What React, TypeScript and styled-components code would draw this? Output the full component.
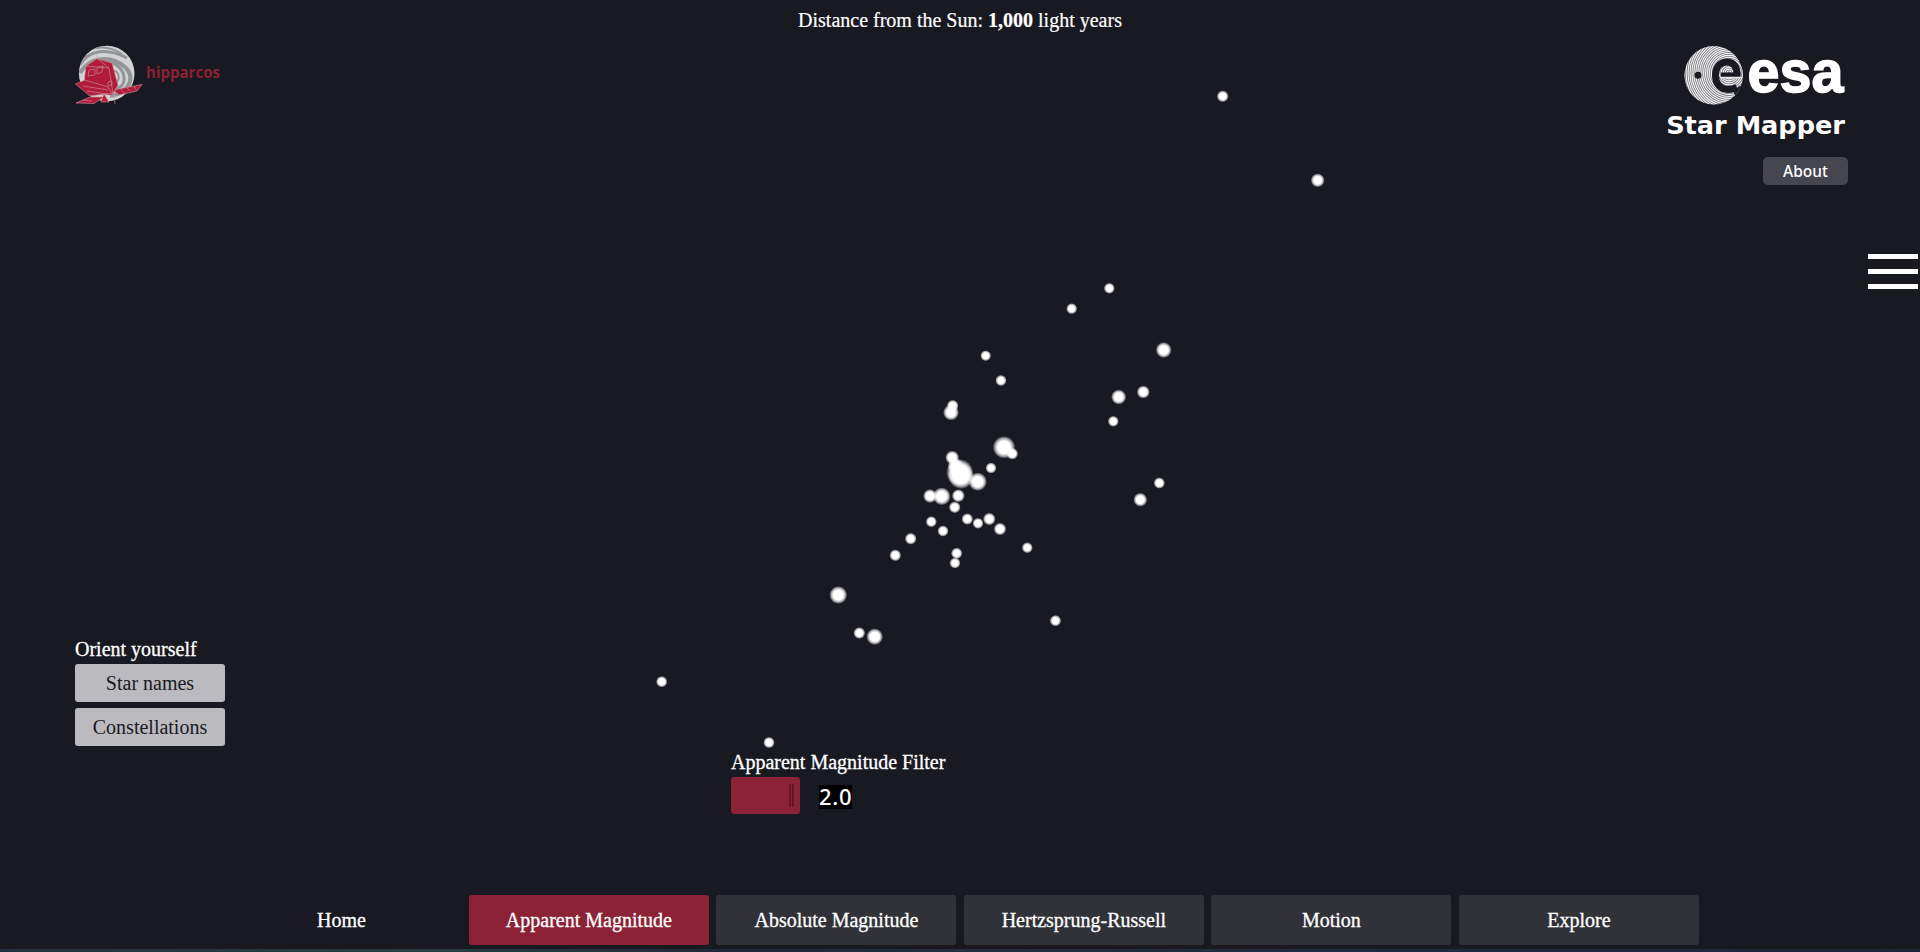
import React from "react";
import styled, { createGlobalStyle } from "styled-components";

const GlobalStyle = createGlobalStyle`
  * { box-sizing: border-box; }
  body {
    margin: 0;
    background: #191922;
    color: #fff;
    font-family: "Liberation Serif", "Times New Roman", serif;
    font-size: 20px;
    overflow: hidden;
  }
  button { font: inherit; border: 0; padding: 0; cursor: pointer; }
`;

const Page = styled.div`
  position: relative;
  display: flex;
  flex-direction: column;
  width: 1920px;
  height: 952px;
  background: #191922;
`;

const StarField = styled.svg`
  position: absolute;
  inset: 0;
  pointer-events: none;
`;

const Main = styled.main`
  display: grid;
  grid-template-columns: 731px 458px 1fr;
  height: 895px;
`;

const LeftColumn = styled.aside`
  display: flex;
  flex-direction: column;
  align-items: flex-start;
  padding: 44px 0 0 75px;
`;

const MissionLogo = styled.svg`
  display: block;
`;

const OrientGroup = styled.section`
  display: flex;
  flex-direction: column;
  gap: 6px;
  width: 150px;
  margin-top: 531px;
`;

const GroupLabel = styled.div`
  height: 24px;
  margin-bottom: -3px;
  line-height: 24px;
  white-space: nowrap;
  -webkit-text-stroke: 0.3px #fff;
`;

const OrientButton = styled.button`
  height: 38px;
  border-radius: 3px;
  background: #bbbabf;
  color: #191922;
`;

const CenterColumn = styled.section`
  display: flex;
  flex-direction: column;
`;

const Distance = styled.p`
  width: 458px;
  height: 42px;
  margin: 0;
  line-height: 40px;
  text-align: center;
  -webkit-text-stroke: 0.2px #fff;
`;

const Filter = styled.div`
  margin-top: 708px;
`;

const FilterLabel = styled.div`
  height: 27px;
  line-height: 24px;
  -webkit-text-stroke: 0.3px #fff;
`;

const FilterRow = styled.div`
  display: flex;
  align-items: center;
  gap: 19px;
`;

const SliderBar = styled.div`
  display: flex;
  justify-content: flex-end;
  align-items: center;
  gap: 1px;
  width: 69px;
  height: 37px;
  padding-right: 6px;
  border-radius: 3px;
  background: #8b2236;
`;

const Grip = styled.i`
  width: 2px;
  height: 23px;
  background: #651525;
`;

const FilterValue = styled.output`
  height: 24px;
  margin-top: 3px;
  background: #000;
  font: 500 22px/23px "Noto Sans", sans-serif;
  letter-spacing: 0.7px;
`;

const RightColumn = styled.aside`
  display: flex;
  flex-direction: column;
  align-items: flex-end;
  padding-top: 36px;
`;

const AgencyLogo = styled.svg`
  display: block;
  margin-right: 70px;
`;

const Title = styled.h1`
  height: 34px;
  margin: 1px 75px 0 0;
  font: bold 25.6px/34px "DejaVu Sans", Verdana, sans-serif;
  white-space: nowrap;
`;

const AboutButton = styled.button`
  width: 85px;
  height: 28px;
  margin: 15px 72px 0 0;
  border-radius: 5px;
  background: #46464e;
  color: #fff;
  font: 500 15.5px/28px "Noto Sans", sans-serif;
`;

const MenuButton = styled.button`
  display: flex;
  flex-direction: column;
  gap: 10px;
  width: 50px;
  margin: 69px 2px 0 0;
  background: none;
`;

const MenuLine = styled.span`
  height: 5px;
  width: 50px;
  background: #fff;
`;

const Nav = styled.nav`
  display: flex;
  gap: 7.5px;
  height: 54px;
  padding-left: 221.4px;
`;

const NavItem = styled.button<{ $tone: "plain" | "active" | "idle" }>`
  width: 240px;
  height: 50px;
  border-radius: 3px;
  color: #fff;
  -webkit-text-stroke: 0.3px #fff;
  background: ${(p) =>
    p.$tone === "active" ? "#8b2236" : p.$tone === "idle" ? "#313138" : "transparent"};
`;

const Horizon = styled.div`
  height: 3px;
  background: linear-gradient(90deg, #22313f 0, #263b42 300px, #263d3f 480px, #22283c 720px, #22303f 960px, #202a40 1500px, #1e2538 100%);
`;

type Star = [number, number, number];

const stars: Star[] = [
  [1222.7, 96.3, 6], [1317.7, 180.3, 7], [1109.3, 288.3, 5.6], [1071.7, 308.7, 5.6],
  [985.7, 355.7, 5.5], [1163.7, 350, 8], [1001, 380.5, 5.7], [1118.7, 397, 7.6],
  [1143.3, 392, 6.6], [1113.3, 421.3, 5.6], [952.7, 405.7, 6], [951, 412.5, 8],
  [1004, 447.3, 11.3], [1012.3, 453.7, 6], [952.2, 457.5, 7], [955.5, 466, 8],
  [959.7, 472.5, 13.6], [961, 476, 13], [977.7, 481.7, 9.3], [991, 468, 5.6],
  [1159.3, 483, 5.8], [1140.3, 499.7, 7], [930, 496, 7], [941.7, 496.3, 9],
  [958.3, 495.7, 6.6], [954.7, 507.3, 6], [931.3, 521.7, 5.7], [943, 531, 5.7],
  [967.3, 519, 5.9], [978, 523.3, 5.6], [989.3, 519, 6.4], [1000, 529, 6.4],
  [910.7, 538.7, 6], [895.3, 555.3, 6], [956.7, 553.3, 5.8], [955, 563, 5.6],
  [1027.3, 547.7, 5.6], [838.3, 595, 9], [859.3, 633, 6], [874.7, 636.7, 8.4],
  [661.7, 681.7, 5.8], [769, 742.5, 5.8], [1055.5, 620.7, 5.8],
];

const navItems = [
  { label: "Home", tone: "plain" },
  { label: "Apparent Magnitude", tone: "active" },
  { label: "Absolute Magnitude", tone: "idle" },
  { label: "Hertzsprung-Russell", tone: "idle" },
  { label: "Motion", tone: "idle" },
  { label: "Explore", tone: "idle" },
] as const;

function Stars() {
  return (
    <StarField width="1920" height="952">
      <defs>
        <radialGradient id="glow">
          <stop offset="0.56" stopColor="#fff" />
          <stop offset="0.8" stopColor="#fff" stopOpacity="0.6" />
          <stop offset="1" stopColor="#fff" stopOpacity="0" />
        </radialGradient>
      </defs>
      {stars.map(([x, y, r]) => (
        <circle key={`${x}-${y}`} cx={x} cy={y} r={r} fill="url(#glow)" />
      ))}
    </StarField>
  );
}

function Hipparcos() {
  return (
    <MissionLogo width="160" height="62" viewBox="75 44 160 62">
      <defs>
        <clipPath id="globe"><circle cx="106.7" cy="73.5" r="27.8" /></clipPath>
      </defs>
      <circle cx="106.7" cy="73.5" r="27.8" fill="#d3d3d4" />
      <g clipPath="url(#globe)" fill="none" stroke="#929597">
        <path d="M80 65C89 49 108 48 127 58" strokeWidth="3" />
        <path d="M80 73C91 55 112 56 125 67C136 78 129 93 110 96" strokeWidth="4" />
        <path d="M96 63C111 58 123 67 124 77C125 86 119 89 112 89" strokeWidth="3" />
        <path d="M110 72C117 68 121 76 117 82" strokeWidth="2" />
        <path d="M89 50C105 44 116 50 122 54" strokeWidth="2" />
      </g>
      <g fill="#b01c39" stroke="#d095a1" strokeWidth="0.6" strokeLinejoin="round">
        <path d="M76 103L90 97L104 97L94 103.500Z" />
        <path d="M113 90L142 84.500L137 91L119 95Z" />
        <path d="M86 66L97 58.500L112 63L118 85L112 95L88 94L84 83Z" />
        <path d="M97 58.500L109 68L113 94M86 66L109 68" fill="none" />
        <path d="M75.500 84L85 80L108 87L112 93L90 96Z" />
        <path d="M83 86L108 90M87 91L107 94" fill="none" />
        <path d="M101 102L104 94L109 102Z" />
        <path d="M89 70L95 69L95 75L88 76ZM97 68L103 66L102 72L97 74Z" fill="none" />
        <path d="M108 82L112 81L112 85L108 86ZM97 59V55M114 95L115 104" fill="none" />
        <path d="M83 100L92 101M121 89L124 93M127 88L130 91M134 86L136 89" />
      </g>
      <text x="146" y="77.500" textLength="74" lengthAdjust="spacingAndGlyphs" fill="#8a2135"
        fontFamily="Open Sans, sans-serif" fontWeight="700" fontSize="16.500">hipparcos</text>
    </MissionLogo>
  );
}

function Esa() {
  const rings = Array.from({ length: 26 }, (_, i) => 2 + i * 1.95);
  return (
    <AgencyLogo width="168" height="71" viewBox="1682 36 168 71">
      <defs>
        <clipPath id="disc"><circle cx="1713.7" cy="75.3" r="29.2" /></clipPath>
      </defs>
      <g clipPath="url(#disc)">
        <rect x="1684" y="45" width="60" height="61" fill="#77777e" />
        <g fill="none" stroke="#f4f4f4" strokeWidth="1.15">
          {rings.map((r) => <circle key={r} cx="1729" cy="73" r={r} />)}
        </g>
        <circle cx="1698" cy="75.2" r="3.5" fill="#191922" />
        <path d="M1737 75.500C1737.500 67 1733.500 62 1727 62C1720 62 1715.500 67.500 1715.500 75.800C1715.500 84 1720.500 89.500 1728 89.500C1731.500 89.500 1734 89 1737 87.500"
          fill="none" stroke="#191922" strokeWidth="7" />
        <path d="M1721 74.700H1740.500" stroke="#191922" strokeWidth="4.400" />
        <path d="M1734 93L1738 87L1746 83V100L1734 94Z" fill="#191922" />
        <path d="M1720 77.600H1744" stroke="#e8e8e8" strokeWidth="1.500" />
      </g>
      <text x="1747.500" y="92.300" textLength="96" lengthAdjust="spacingAndGlyphs" fill="#fff" stroke="#fff"
        strokeWidth="1.500" fontFamily="Liberation Sans, Arial, sans-serif" fontWeight="700" fontSize="59">esa</text>
    </AgencyLogo>
  );
}

export default function App() {
  return (
    <>
      <GlobalStyle />
      <Page>
        <Stars />
        <Main>
          <LeftColumn>
            <Hipparcos />
            <OrientGroup>
              <GroupLabel>Orient yourself</GroupLabel>
              <OrientButton>Star names</OrientButton>
              <OrientButton>Constellations</OrientButton>
            </OrientGroup>
          </LeftColumn>
          <CenterColumn>
            <Distance>Distance from the Sun: <b>1,000</b> light years</Distance>
            <Filter>
              <FilterLabel>Apparent Magnitude Filter</FilterLabel>
              <FilterRow>
                <SliderBar><Grip /><Grip /></SliderBar>
                <FilterValue>2.0</FilterValue>
              </FilterRow>
            </Filter>
          </CenterColumn>
          <RightColumn>
            <Esa />
            <Title>Star Mapper</Title>
            <AboutButton>About</AboutButton>
            <MenuButton aria-label="Menu"><MenuLine /><MenuLine /><MenuLine /></MenuButton>
          </RightColumn>
        </Main>
        <Nav>
          {navItems.map(({ label, tone }) => (
            <NavItem key={label} $tone={tone}>{label}</NavItem>
          ))}
        </Nav>
        <Horizon />
      </Page>
    </>
  );
}
